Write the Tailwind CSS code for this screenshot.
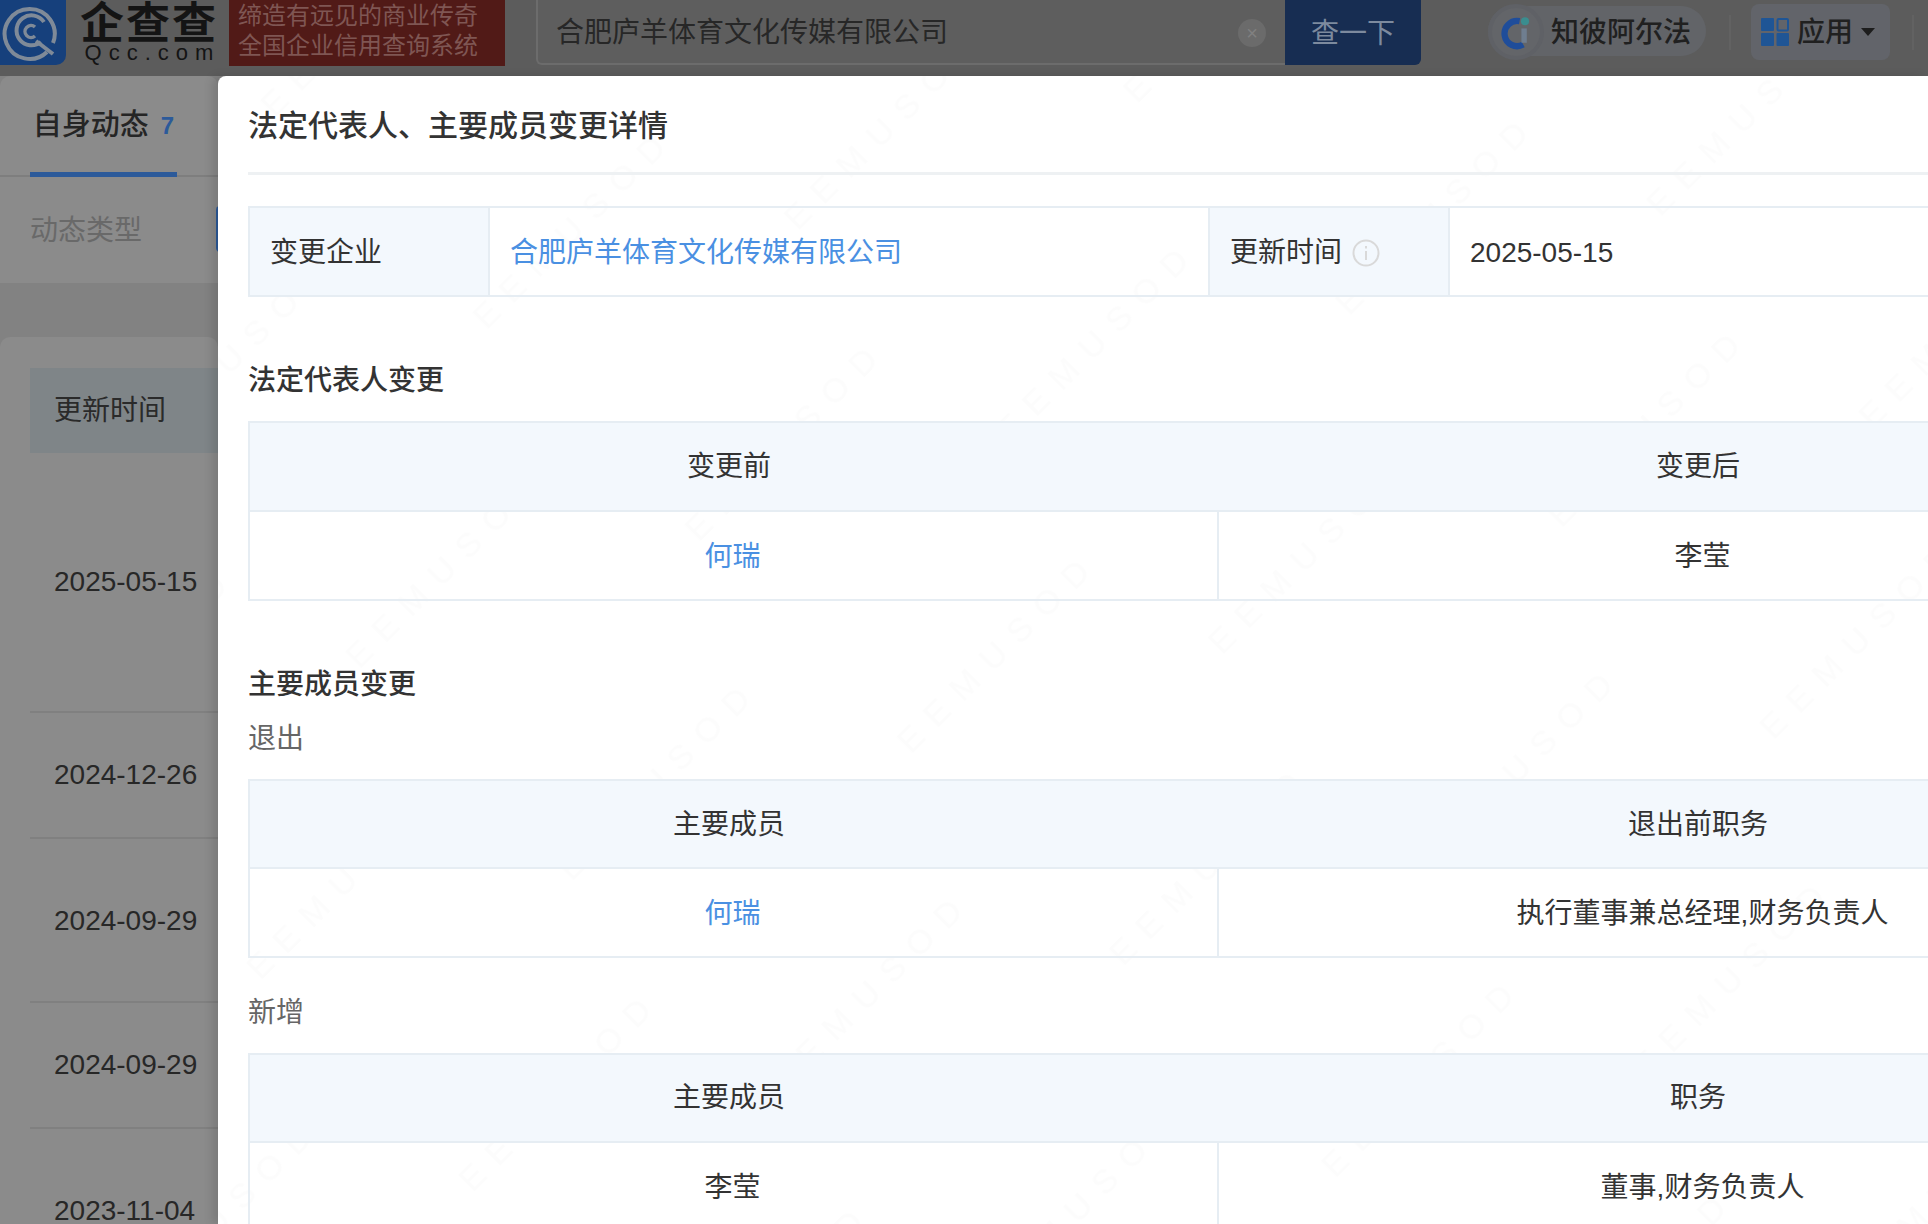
<!DOCTYPE html>
<html lang="zh-CN">
<head>
<meta charset="utf-8">
<title>法定代表人、主要成员变更详情</title>
<script src="https://cdn.jsdelivr.net/npm/@tailwindcss/browser@4"></script>
</head>
<body class="overflow-hidden">
<div class="relative flex flex-col w-[1928px] h-[1224px] overflow-hidden bg-[#828282] text-[28px] text-[#333333] font-['Liberation_Sans','Noto_Sans_CJK_SC',sans-serif]">

  <!-- top bar -->
  <header class="relative flex h-[76px] shrink-0 items-start bg-[#5c5c5c]">
    <div class="h-[65px] w-[66px] shrink-0 overflow-hidden rounded-br-[10px] bg-[#16407c]">
      <svg viewBox="0 0 66 65" class="h-[65px] w-[66px]" fill="none" stroke="#7f8a98">
        <path d="M47 52 A25 25 0 1 1 53 43" stroke-width="4"/>
        <path d="M41 42 A15 15 0 1 1 44 22" stroke-width="4"/>
        <path d="M35 27 A6 6 0 1 0 35 36" stroke-width="3.5"/>
        <path d="M36 41 L53 54" stroke-width="4"/>
      </svg>
    </div>
    <div class="ml-[13px] flex w-[140px] shrink-0 flex-col items-center text-[#141414]">
      <div class="mt-[2px] h-[44px] text-[44px] leading-[44px] font-semibold tracking-[2px] whitespace-nowrap">企查查</div>
      <div class="h-[14px] text-[22px] leading-[14px] font-medium tracking-[7px] whitespace-nowrap pl-[7px]">Qcc.com</div>
    </div>
    <div class="ml-[10px] flex h-[66px] w-[276px] shrink-0 flex-col items-center justify-center bg-[#511a17] pb-[5px] pr-[18px] text-[24px] leading-[30px] text-[#7f5653]">
      <div>缔造有远见的商业传奇</div>
      <div>全国企业信用查询系统</div>
    </div>
    <div class="ml-[31px] flex h-[65px] w-[749px] shrink-0 items-center justify-between rounded-bl-md border-b-2 border-l-2 border-[#6c6c6c] bg-[#5e5e5e] pl-[18px] pr-[19px] pt-[2px] text-[#272727]">
      <span>合肥庐羊体育文化传媒有限公司</span>
      <span class="flex h-[28px] w-[28px] items-center justify-center rounded-full bg-[#6b6b6b] text-[20px] text-[#808080]">×</span>
    </div>
    <div class="flex h-[65px] w-[136px] shrink-0 items-center justify-center rounded-br-md bg-[#172d52] pt-[2px] text-[#7d8a9e]">查一下</div>
    <div class="relative ml-[67px] mt-[6px] flex h-[50px] w-[218px] shrink-0 items-center rounded-full bg-[#626468] pl-[63px] pt-[3px] font-medium text-[#202020]">
      <span class="absolute left-0 top-[-2px] flex h-[56px] w-[56px] items-center justify-center rounded-full border-4 border-[#5f6166] bg-[#636569]">
        <svg viewBox="0 0 40 40" class="h-[36px] w-[36px]" fill="none">
          <path d="M24 8 A14 14 0 1 0 28 34" stroke="#1f4d9a" stroke-width="7"/>
          <circle cx="30" cy="8" r="4.5" fill="#3a8d8f"/>
          <path d="M29 16 L29 32" stroke="#6f7e90" stroke-width="6"/>
        </svg>
      </span>
      知彼阿尔法
    </div>
    <div class="ml-[23px] mt-[15px] h-[35px] w-[2px] shrink-0 bg-[#626262]"></div>
    <div class="ml-[20px] mt-[4px] flex h-[56px] w-[139px] shrink-0 items-center rounded-[8px] bg-[#62646a] pl-[10px] font-medium text-[#202020]">
      <svg viewBox="0 0 28 28" class="h-[28px] w-[28px] shrink-0">
        <rect x="0" y="0" width="13" height="13" rx="1" fill="#1f5595"/>
        <rect x="16.5" y="1" width="10.5" height="11.5" rx="1" fill="none" stroke="#1f5595" stroke-width="2"/>
        <rect x="0" y="15" width="13" height="13" rx="1" fill="#1f5595"/>
        <rect x="15.5" y="15" width="12.5" height="13" rx="1" fill="#1f5595"/>
      </svg>
      <span class="ml-[8px] pt-[2px]">应用</span>
      <span class="ml-[8px] h-0 w-0 border-x-[7px] border-t-[8px] border-x-transparent border-t-[#1d1d1d]"></span>
    </div>
    <div class="ml-[22px] mt-[15px] h-[35px] w-[2px] shrink-0 bg-[#626262]"></div>
  </header>

  <div class="flex min-h-0 flex-1">
    <!-- left column, mostly covered by the dialog -->
    <aside class="relative w-[218px] shrink-0 overflow-hidden">
      <section class="h-[207px] rounded-t-[10px] bg-[#8b8b8b]">
        <div class="flex h-[101px] border-b-2 border-[#7e7e7e]">
          <div class="ml-[30px] flex h-[101px] w-[147px] items-center justify-center gap-[12px] border-b-[5px] border-[#2c5a9a] pt-[3px] whitespace-nowrap">
            <span class="text-[29px] font-medium text-[#252525]">自身动态</span>
            <span class="text-[24px] font-bold text-[#2c5a9a]">7</span>
          </div>
        </div>
        <div class="relative flex h-[104px] items-center pl-[30px] pt-[4px] text-[#696969]">
          <span>动态类型</span>
          <span class="absolute right-[-2px] top-[29px] h-[46px] w-[4px] rounded-l-sm bg-[#2c5a9a]"></span>
        </div>
      </section>
      <section class="mt-[54px] h-[900px] rounded-t-[10px] bg-[#8b8b8b] pl-[30px] pt-[31px] text-[#272727]">
        <div class="flex h-[85px] items-center bg-[#7f8588] pl-[24px] text-[#2a2a2a]">更新时间</div>
        <div class="flex h-[260px] items-center border-b-2 border-[#808080] pl-[24px]">2025-05-15</div>
        <div class="flex h-[126px] items-center border-b-2 border-[#808080] pl-[24px]">2024-12-26</div>
        <div class="flex h-[164px] items-center border-b-2 border-[#808080] pt-[2px] pl-[24px]">2024-09-29</div>
        <div class="flex h-[126px] items-center border-b-2 border-[#808080] pl-[24px]">2024-09-29</div>
        <div class="flex h-[164px] items-center pl-[24px]">2023-11-04</div>
      </section>
    </aside>

    <!-- dialog -->
    <main class="relative z-10 flex-1 overflow-hidden rounded-tl-[8px] bg-white pl-[30px] shadow-[-6px_0_10px_rgba(0,0,0,0.12)]">
      <!-- faint watermark -->
      <svg class="pointer-events-none absolute inset-0 h-full w-full" aria-hidden="true">
        <defs>
          <pattern id="wm" width="620" height="300" patternUnits="userSpaceOnUse" patternTransform="rotate(-45)">
            <text x="10" y="70" font-family="Liberation Sans" font-size="34" letter-spacing="14" fill="#000000" fill-opacity="0.013">EEMUSOD</text>
            <text x="300" y="220" font-family="Liberation Sans" font-size="34" letter-spacing="14" fill="#000000" fill-opacity="0.013">EEMUSOD</text>
          </pattern>
        </defs>
        <rect width="100%" height="100%" fill="url(#wm)"/>
      </svg>

      <div class="relative">
        <h1 class="flex h-[99px] items-center border-b-[3px] border-[#eef1f3] pt-[3px] text-[30px] font-medium">法定代表人、主要成员变更详情</h1>

        <div class="mt-[31px] flex h-[91px] w-[1800px] border-2 border-[#e6edf3] pt-0 leading-none">
          <div class="flex w-[240px] shrink-0 items-center border-r-2 border-[#e6edf3] bg-[#f3f8fd] pl-[20px] pt-[2px]">变更企业</div>
          <div class="flex w-[720px] shrink-0 items-center border-r-2 border-[#e6edf3] pl-[20px] pt-[2px] text-[#4a90e2]">合肥庐羊体育文化传媒有限公司</div>
          <div class="flex w-[240px] shrink-0 items-center gap-[10px] border-r-2 border-[#e6edf3] bg-[#f3f8fd] pl-[20px] pt-[2px]">
            更新时间
            <svg viewBox="0 0 28 28" class="h-[28px] w-[28px]" fill="none" stroke="#d9d9d9" stroke-width="2">
              <circle cx="14" cy="14" r="12.5"/>
              <path d="M14 12 V21 M14 7 V9.5"/>
            </svg>
          </div>
          <div class="flex flex-1 items-center pl-[20px] pt-[2px]">2025-05-15</div>
        </div>

        <h2 class="mt-[62px] h-[40px] pt-[2px] text-[28px] leading-[40px] font-medium">法定代表人变更</h2>
        <div class="mt-[22px] w-[1942px] border-2 border-[#e6edf3]">
          <div class="grid h-[89px] grid-cols-[958px_980px] items-center border-b-2 border-[#e6edf3] bg-[#f3f8fd] text-center">
            <div>变更前</div><div>变更后</div>
          </div>
          <div class="grid h-[87px] grid-cols-[969px_969px] items-center pt-0 text-center">
            <div class="flex h-full items-center justify-center border-r-2 border-[#e6edf3] pr-[2px] pt-[2px] text-[#4a90e2]">何瑞</div><div class="pr-[2px] pt-[2px]">李莹</div>
          </div>
        </div>

        <h2 class="mt-[62px] h-[40px] pt-[2px] text-[28px] leading-[40px] font-medium">主要成员变更</h2>
        <div class="mt-[14px] h-[40px] pt-[2px] leading-[40px] text-[#666666]">退出</div>
        <div class="mt-[22px] w-[1942px] border-2 border-[#e6edf3]">
          <div class="grid h-[88px] grid-cols-[958px_980px] items-center border-b-2 border-[#e6edf3] bg-[#f3f8fd] pt-[1px] text-center">
            <div>主要成员</div><div>退出前职务</div>
          </div>
          <div class="grid h-[87px] grid-cols-[969px_969px] items-center text-center">
            <div class="flex h-full items-center justify-center border-r-2 border-[#e6edf3] pr-[2px] pt-[2px] text-[#4a90e2]">何瑞</div><div class="pr-[2px] pt-[2px]">执行董事兼总经理,财务负责人</div>
          </div>
        </div>

        <div class="mt-[33px] h-[40px] pt-[2px] leading-[40px] text-[#666666]">新增</div>
        <div class="mt-[22px] w-[1942px] border-2 border-[#e6edf3]">
          <div class="grid h-[88px] grid-cols-[958px_980px] items-center border-b-2 border-[#e6edf3] bg-[#f3f8fd] text-center">
            <div>主要成员</div><div>职务</div>
          </div>
          <div class="grid h-[88px] grid-cols-[969px_969px] items-center text-center">
            <div class="flex h-full items-center justify-center border-r-2 border-[#e6edf3] pr-[2px] pt-[2px]">李莹</div><div class="pr-[2px] pt-[2px]">董事,财务负责人</div>
          </div>
        </div>
      </div>
    </main>
  </div>
</div>
</body>
</html>
